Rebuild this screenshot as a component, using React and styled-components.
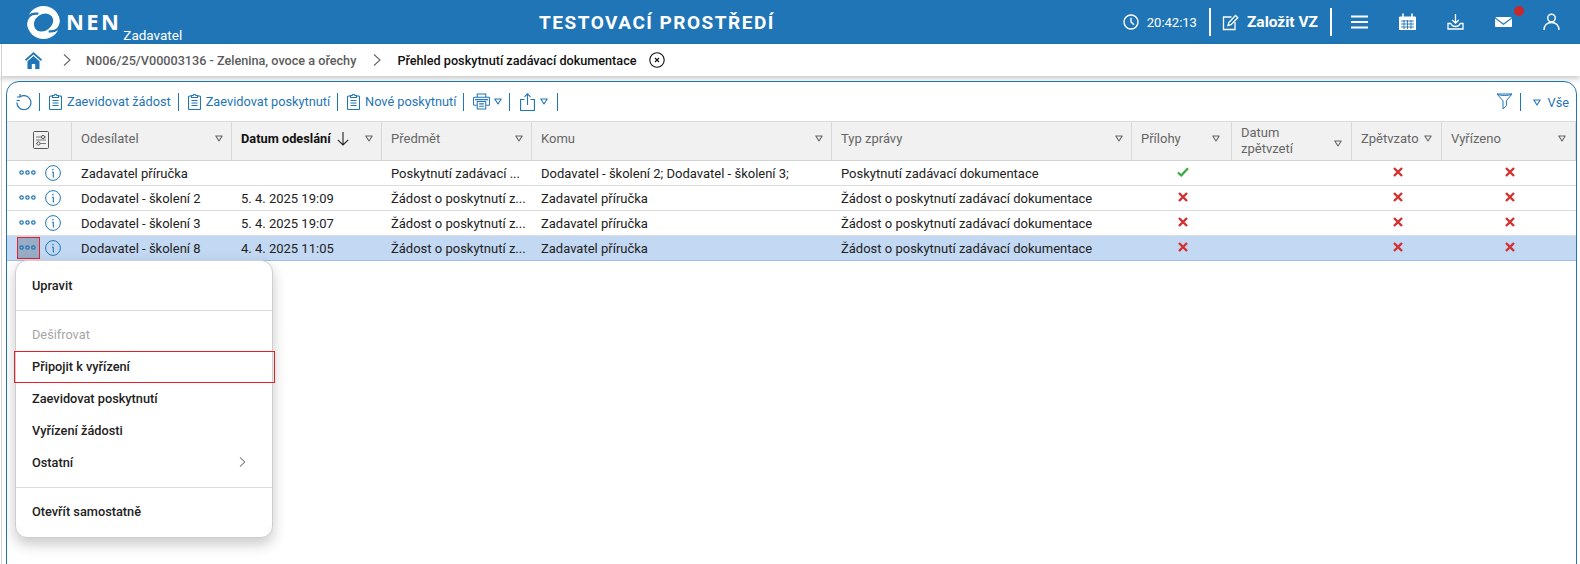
import React from 'react'
import styled, { createGlobalStyle } from 'styled-components'

const blue = '#1f75b5'
const columns = '65px 160px 150px 150px 300px 300px 100px 120px 90px 134px'

const Global = createGlobalStyle`
  html, body { margin: 0; padding: 0; background: #fff; }
  body { font-family: Roboto, "Liberation Sans", sans-serif; overflow: hidden; }
  #root { height: 564px; }
`

const Page = styled.div`
  width: 1580px;
  height: 564px;
  position: relative;
  overflow: hidden;
  &::before {
    content: '';
    position: absolute;
    left: 1px;
    top: 44px;
    bottom: 0;
    width: 1px;
    background: #d2d2d2;
    z-index: 2;
  }
`

const Header = styled.header`
  height: 44px;
  background: ${blue};
  color: #fff;
  display: grid;
  grid-template-columns: 1fr 1fr;
  position: relative;
`
const Brand = styled.div`
  display: flex;
  align-items: flex-start;
  padding-left: 27px;
  svg { margin-top: 6px; }
`
const BrandName = styled.span`
  font: 700 22px/1 "Open Sans", Roboto, sans-serif;
  letter-spacing: 2.4px;
  margin: 10px 0 0 6px;
`
const BrandRole = styled.span`
  font-size: 13.5px;
  line-height: 16px;
  margin: 27px 0 0 2px;
`
const Title = styled.div`
  position: absolute;
  left: 539px;
  top: 12px;
  font-size: 19px;
  line-height: 22px;
  font-weight: 700;
  letter-spacing: 1.5px;
  white-space: nowrap;
`
const HeaderRight = styled.div`
  display: flex;
  justify-content: flex-end;
  align-items: center;
  padding-right: 20px;
`
const Clock = styled.div`
  display: flex;
  align-items: center;
  gap: 8px;
  font-size: 13px;
  padding-right: 12px;
`
const NewButton = styled.div`
  height: 28px;
  display: flex;
  align-items: center;
  gap: 8px;
  padding: 0 12px 0 11px;
  border-left: 2px solid #fff;
  border-right: 2px solid #fff;
  font-size: 15.500px;
  font-weight: 700;
  margin-right: 19px;
`
const HeaderIcons = styled.div`
  display: flex;
  gap: 31px;
`
const IconSlot = styled.span`
  width: 17px;
  height: 18px;
  display: flex;
  position: relative;
`
const Dot = styled.i`
  position: absolute;
  left: 19px;
  top: -7px;
  width: 10px;
  height: 10px;
  border-radius: 50%;
  background: #c8282d;
`

const Crumbs = styled.nav`
  height: 32px;
  display: flex;
  align-items: center;
  padding-left: 25px;
  background: #fff;
  box-shadow: 0 3px 5px rgba(0, 0, 0, 0.2);
  position: relative;
  font-size: 12.650px;
  font-weight: 500;
  color: #555;
`
const Crumb = styled.span`
  margin: ${p => p.$margin || '0'};
  color: ${p => (p.$current ? '#111' : '#5c5c5c')};
  white-space: nowrap;
  display: flex;
`

const Panel = styled.section`
  position: absolute;
  left: 6px;
  top: 81px;
  width: 1571px;
  height: 500px;
  box-sizing: border-box;
  border: 1.5px solid ${blue};
  border-radius: 13px 13px 0 0;
`
const Toolbar = styled.div`
  height: 38.500px;
  display: flex;
  align-items: center;
  padding: 1px 7px 0 9px;
  box-sizing: border-box;
  color: ${blue};
  font-size: 12.750px;
`
const Tool = styled.span`
  display: flex;
  align-items: center;
  gap: ${p => p.$gap || 5}px;
  white-space: nowrap;
  margin: ${p => p.$margin || '0'};
`
const Sep = styled.i`
  width: 1px;
  height: 18px;
  background: ${blue};
  margin: 0 9px 0 7px;
`
const Spacer = styled.div`
  flex: 1;
`

const Row = styled.div`
  display: grid;
  grid-template-columns: ${columns};
  height: 25px;
  box-sizing: border-box;
  border-bottom: 1px solid ${p => (p.$selected ? '#9cc1e8' : '#dcdcdc')};
  background: ${p => (p.$selected ? '#c2d8f3' : '#fff')};
  font-size: 13px;
  color: #222;
`
const HeadRow = styled.div`
  display: grid;
  grid-template-columns: ${columns};
  height: 40px;
  box-sizing: border-box;
  background: #f1f1f1;
  border-top: 1px solid #dcdcdc;
  border-bottom: 1px solid #d4d4d4;
`
const HeadCell = styled.div`
  border-right: 1px solid #d8d8d8;
  display: flex;
  align-items: center;
  justify-content: space-between;
  padding: 0 ${p => p.$right || 8}px ${p => (p.$low ? 0 : 3)}px 9px;
  font-size: ${p => (p.$active ? 12.8 : 13)}px;
  line-height: 16px;
  color: ${p => (p.$active ? '#111' : '#666')};
  font-weight: ${p => (p.$active ? 700 : 400)};
  svg.sort { margin-top: ${p => (p.$low ? 6 : -2)}px; }
`
const HeadLabel = styled.span`
  display: flex;
  align-items: center;
  gap: 6px;
`
const Settings = styled.div`
  border-right: 1px solid #d8d8d8;
  display: flex;
  align-items: center;
  justify-content: center;
  padding: 0 0 2px 3px;
`
const Cell = styled.div`
  display: flex;
  align-items: center;
  justify-content: ${p => (p.$center ? 'center' : 'flex-start')};
  padding-left: ${p => (p.$center ? 2 : 9)}px;
  padding-top: ${p => (p.$center ? 0 : 1)}px;
  padding-bottom: ${p => (p.$center ? 1 : 0)}px;
  white-space: nowrap;
  min-width: 0;
`
const Actions = styled.div`
  display: flex;
  align-items: center;
  padding-left: 9.500px;
  gap: 5px;
`
const MoreBtn = styled.span`
  width: 23px;
  height: 22px;
  box-sizing: border-box;
  display: flex;
  align-items: center;
  justify-content: center;
  padding-right: 2px;
  background: ${p => (p.$active ? '#98adc5' : 'transparent')};
  border: ${p => (p.$active ? '1px solid #e5202a' : '1px solid transparent')};
`

const Menu = styled.div`
  position: absolute;
  left: 15px;
  top: 260px;
  width: 258px;
  box-sizing: border-box;
  padding: 8px 0 10px;
  background: #fff;
  border: 1px solid #cfcfcf;
  border-radius: 12px;
  box-shadow: 0 6px 14px rgba(0, 0, 0, 0.22);
  font-size: 12.750px;
  font-weight: 500;
  color: #222;
`
const MenuItem = styled.div`
  height: 32px;
  display: flex;
  align-items: center;
  justify-content: space-between;
  padding: 0 26px 0 16px;
  position: relative;
  color: ${p => (p.$disabled ? '#a6a6a6' : '#222')};
  font-weight: ${p => (p.$disabled ? 400 : 500)};
  ${p => p.$marked && `
    &::after {
      content: '';
      position: absolute;
      left: -2px;
      right: -3px;
      top: 1px;
      bottom: -1px;
      border: 1px solid #e5202a;
    }
  `}
`
const MenuLine = styled.hr`
  border: 0;
  border-top: 1px solid #dcdcdc;
  margin: 9px 0 7px;
`

const Svg = ({ w = 16, h = 16, box, children, ...rest }) => (
  <svg width={w} height={h} viewBox={box || `0 0 ${w} ${h}`} fill="none" stroke="currentColor" {...rest}>
    {children}
  </svg>
)

const Logo = () => (
  <svg width="33" height="33" viewBox="0 0 32 32">
    <circle cx="16" cy="16" r="16" fill="#fff" />
    <ellipse cx="16" cy="16" rx="10" ry="8" transform="rotate(-35 16 16)" fill={blue} />
    <path d="M-1 17C0 10 4 6.500 11 7.500" fill="none" stroke={blue} strokeWidth="2.200" />
    <path d="M33 15C32 22 28 25.500 21 24.500" fill="none" stroke={blue} strokeWidth="2.200" />
  </svg>
)

const ClockIcon = () => (
  <Svg w={16} h={16} strokeWidth="1.4"><circle cx="8" cy="8" r="7" /><path d="M8 3.800V8l3 2.800" /></Svg>
)
const EditIcon = () => (
  <Svg w={17} h={17} strokeWidth="1.3">
    <path d="M9.500 3H1.500v12.500H13V8" />
    <path d="M6 11.500l.8-3L13.500 1.500l2.300 2.200L9 10.700z" />
  </Svg>
)
const MenuIcon = () => (
  <Svg w={17} h={18} strokeWidth="2.200"><path d="M0 3.500h17M0 9h17M0 14.500h17" /></Svg>
)
const CalendarIcon = () => (
  <Svg w={17} h={18}>
    <path d="M1 3.500h15a1 1 0 011 1V17H0V4.500a1 1 0 011-1z" fill="#fff" stroke="none" />
    <path d="M4 .5v4M13 .5v4" stroke="#fff" strokeWidth="1.600" />
    <path d="M2 8h13M2 11h13M2 14h13M5 7v9M8.500 7v9M12 7v9" stroke={blue} strokeWidth="0.900" />
  </Svg>
)
const DownloadIcon = () => (
  <Svg w={17} h={18} strokeWidth="1.300">
    <path d="M8.500 1v9M5.200 7l3.300 3.200L11.800 7" />
    <path d="M4 10.500H1v5.500h15v-5.500h-3M4 10.500c.5 2 2 3 4.500 3s4-1 4.500-3" />
  </Svg>
)
const MailIcon = () => (
  <Svg w={17} h={18}>
    <path d="M1.500 4h14c.4 0 .8.200 1 .4L8.500 10.500.5 4.400c.2-.2.600-.4 1-.4z" fill="#fff" stroke="none" />
    <path d="M0 5.600l8.500 6.300L17 5.600V13a1 1 0 01-1 1H1a1 1 0 01-1-1z" fill="#fff" stroke="none" />
  </Svg>
)
const UserIcon = () => (
  <Svg w={17} h={18} strokeWidth="1.400">
    <circle cx="8.500" cy="5" r="3.800" />
    <path d="M1 17c0-4.500 3-7.500 7.500-7.500S16 12.500 16 17" />
  </Svg>
)
const HomeIcon = () => (
  <svg width="17" height="17" viewBox="0 0 17 17" fill={blue}>
    <path d="M8.500 0L0 7.600l1 1.300 7.500-6.500L16 8.900l1-1.300z" />
    <path d="M8.500 4L2.500 9.200V17h4.300v-5h3.400v5h4.300V9.200z" />
  </svg>
)
const Chevron = ({ size = 12, color = '#666' }) => (
  <svg width={size * 0.67} height={size} viewBox="0 0 8 12" fill="none" stroke={color} strokeWidth="1.100">
    <path d="M1 .5L7 6l-6 5.500" />
  </svg>
)
const CloseCircle = () => (
  <Svg w={16} h={16} stroke="#111" strokeWidth="1.100">
    <circle cx="8" cy="8" r="7.200" />
    <path d="M6 6l4 4M10 6l-4 4" />
  </Svg>
)
const RefreshIcon = () => (
  <Svg w={16} h={16} strokeWidth="1.200">
    <path d="M4 2.800A7 7 0 11.900 8.500" />
    <path d="M.7 6.500H3.800" strokeWidth="1.200" />
    <path d="M4 0v3H1" />
  </Svg>
)
const ClipboardIcon = () => (
  <Svg w={13} h={17} strokeWidth="1.100">
    <path d="M3.500 3H1.500a1 1 0 00-1 1v11.500a1 1 0 001 1h10a1 1 0 001-1V4a1 1 0 00-1-1h-2" />
    <path d="M3.500 4.500V2.500h1.700a1.300 1.300 0 012.600 0h1.700v2z" />
    <path d="M3.500 7.500h6M3.500 10h6M3.500 12.500h6" />
  </Svg>
)
const PrinterIcon = () => (
  <Svg w={17} h={17} box="0 0 18 17" strokeWidth="1.100">
    <path d="M4.500 4V.6h9V4" />
    <path d="M4 12.500H1.500a1 1 0 01-1-1V5a1 1 0 011-1h15a1 1 0 011 1v6.500a1 1 0 01-1 1H14" />
    <path d="M4.500 8.500h9v8h-9zM2 6.500h14M6.500 11h5M6.500 13.500h5" />
  </Svg>
)
const ShareIcon = () => (
  <Svg w={15} h={18} strokeWidth="1.100">
    <path d="M4.500 6.500H.6v11h13.800v-11h-3.900" />
    <path d="M7.500 12V1M4.500 3.800L7.500 .8l3 3" />
  </Svg>
)
const FilterIcon = () => (
  <Svg w={17} h={17} strokeWidth="1">
    <path d="M1 1h15l-5.600 6.800v5L7 16V7.800z" />
    <path d="M1 1c3 2 12 2 15 0" />
  </Svg>
)
const SortMark = ({ color = '#666' }) => (
  <svg className="sort" width="8" height="7" viewBox="0 0 8 7" fill="none" stroke={color} strokeWidth="1.100" strokeLinejoin="round">
    <path d="M.8 1h6.400L4 6z" />
  </svg>
)
const ArrowDown = () => (
  <Svg w={12} h={14} stroke="#222" strokeWidth="1.100"><path d="M6 0v13M.8 7.800L6 13l5.200-5.200" /></Svg>
)
const SettingsIcon = () => (
  <Svg w={16} h={18} stroke="#555" strokeWidth="1">
    <rect x=".5" y=".5" width="15" height="17" rx="1" />
    <path d="M3 6h10M3 9h10M3 12.500h10" stroke="#777" />
    <circle cx="10" cy="6" r="1.600" fill="#f1f1f1" />
    <circle cx="5.500" cy="12.500" r="1.600" fill="#f1f1f1" />
  </Svg>
)
const DotsIcon = () => (
  <Svg w={17} h={5} stroke={blue} strokeWidth="1.200">
    <circle cx="2.600" cy="2.500" r="1.700" />
    <circle cx="8.500" cy="2.500" r="1.700" />
    <circle cx="14.400" cy="2.500" r="1.700" />
  </Svg>
)
const InfoIcon = () => (
  <Svg w={16} h={16} stroke={blue} strokeWidth="1">
    <circle cx="8" cy="8" r="7.400" />
    <path d="M7 7.200h1.300v4.300c0 .4.300.6.800.5" strokeWidth="1.100" />
    <circle cx="7.900" cy="4.700" r=".5" strokeWidth=".8" />
  </Svg>
)
const YesMark = () => (
  <Svg w={12} h={10} stroke="#35ac3c" strokeWidth="2.200"><path d="M1 5.500l3.200 3L11 1.200" /></Svg>
)
const NoMark = () => (
  <Svg w={10} h={10} stroke="#d3302f" strokeWidth="2.400"><path d="M1 1l8 8M9 1l-8 8" /></Svg>
)

const heads = [
  { label: 'Odesílatel' },
  { label: 'Datum odeslání', active: true },
  { label: 'Předmět' },
  { label: 'Komu' },
  { label: 'Typ zprávy' },
  { label: 'Přílohy', right: 11 },
  { label: <>Datum<br />zpětvzetí</>, low: true, right: 9 },
  { label: 'Zpětvzato', right: 9 },
  { label: 'Vyřízeno', right: 9 },
]

const rows = [
  { from: 'Zadavatel příručka', date: '', subject: 'Poskytnutí zadávací ...', to: 'Dodavatel - školení 2; Dodavatel - školení 3;', type: 'Poskytnutí zadávací dokumentace', att: true },
  { from: 'Dodavatel - školení 2', date: '5. 4. 2025 19:09', subject: 'Žádost o poskytnutí z...', to: 'Zadavatel příručka', type: 'Žádost o poskytnutí zadávací dokumentace' },
  { from: 'Dodavatel - školení 3', date: '5. 4. 2025 19:07', subject: 'Žádost o poskytnutí z...', to: 'Zadavatel příručka', type: 'Žádost o poskytnutí zadávací dokumentace' },
  { from: 'Dodavatel - školení 8', date: '4. 4. 2025 11:05', subject: 'Žádost o poskytnutí z...', to: 'Zadavatel příručka', type: 'Žádost o poskytnutí zadávací dokumentace', selected: true },
]

const App = () => {
  return (
    <Page>
      <Global />
      <Header>
        <Brand>
          <Logo />
          <BrandName>NEN</BrandName>
          <BrandRole>Zadavatel</BrandRole>
        </Brand>
        <Title>TESTOVACÍ PROSTŘEDÍ</Title>
        <HeaderRight>
          <Clock><ClockIcon />20:42:13</Clock>
          <NewButton><EditIcon />Založit VZ</NewButton>
          <HeaderIcons>
            <IconSlot><MenuIcon /></IconSlot>
            <IconSlot><CalendarIcon /></IconSlot>
            <IconSlot><DownloadIcon /></IconSlot>
            <IconSlot><MailIcon /><Dot /></IconSlot>
            <IconSlot><UserIcon /></IconSlot>
          </HeaderIcons>
        </HeaderRight>
      </Header>

      <Crumbs>
        <HomeIcon />
        <Crumb $margin="0 15px 0 21px"><Chevron /></Crumb>
        <Crumb>N006/25/V00003136 - Zelenina, ovoce a ořechy</Crumb>
        <Crumb $margin="0 16px 0 17px"><Chevron /></Crumb>
        <Crumb $current>Přehled poskytnutí zadávací dokumentace</Crumb>
        <Crumb $margin="0 0 0 12px"><CloseCircle /></Crumb>
      </Crumbs>

      <Panel>
        <Toolbar>
          <RefreshIcon />
          <Sep />
          <Tool><ClipboardIcon />Zaevidovat žádost</Tool>
          <Sep />
          <Tool><ClipboardIcon />Zaevidovat poskytnutí</Tool>
          <Sep />
          <Tool><ClipboardIcon />Nové poskytnutí</Tool>
          <Sep />
          <Tool $gap={4}><PrinterIcon /><SortMark color={blue} /></Tool>
          <Sep />
          <Tool $margin="0 2px 0 1px"><ShareIcon /><SortMark color={blue} /></Tool>
          <Sep />
          <Spacer />
          <FilterIcon />
          <Sep />
          <Tool $gap={7} $margin="2px 0 0 3px"><SortMark color={blue} />Vše</Tool>
        </Toolbar>

        <HeadRow>
          <Settings><SettingsIcon /></Settings>
          {heads.map((h, i) => (
            <HeadCell key={i} $active={h.active} $low={h.low} $right={h.right}>
              <HeadLabel>{h.label}{h.active && <ArrowDown />}</HeadLabel>
              <SortMark />
            </HeadCell>
          ))}
        </HeadRow>

        {rows.map((r, i) => (
          <Row key={i} $selected={r.selected}>
            <Actions>
              <MoreBtn $active={r.selected}><DotsIcon /></MoreBtn>
              <InfoIcon />
            </Actions>
            <Cell>{r.from}</Cell>
            <Cell>{r.date}</Cell>
            <Cell>{r.subject}</Cell>
            <Cell>{r.to}</Cell>
            <Cell>{r.type}</Cell>
            <Cell $center>{r.att ? <YesMark /> : <NoMark />}</Cell>
            <Cell />
            <Cell $center><NoMark /></Cell>
            <Cell $center><NoMark /></Cell>
          </Row>
        ))}
      </Panel>

      <Menu>
        <MenuItem>Upravit</MenuItem>
        <MenuLine />
        <MenuItem $disabled>Dešifrovat</MenuItem>
        <MenuItem $marked>Připojit k vyřízení</MenuItem>
        <MenuItem>Zaevidovat poskytnutí</MenuItem>
        <MenuItem>Vyřízení žádosti</MenuItem>
        <MenuItem>Ostatní<Chevron size={10} color="#444" /></MenuItem>
        <MenuLine />
        <MenuItem>Otevřít samostatně</MenuItem>
      </Menu>
    </Page>
  )
}

export default App
